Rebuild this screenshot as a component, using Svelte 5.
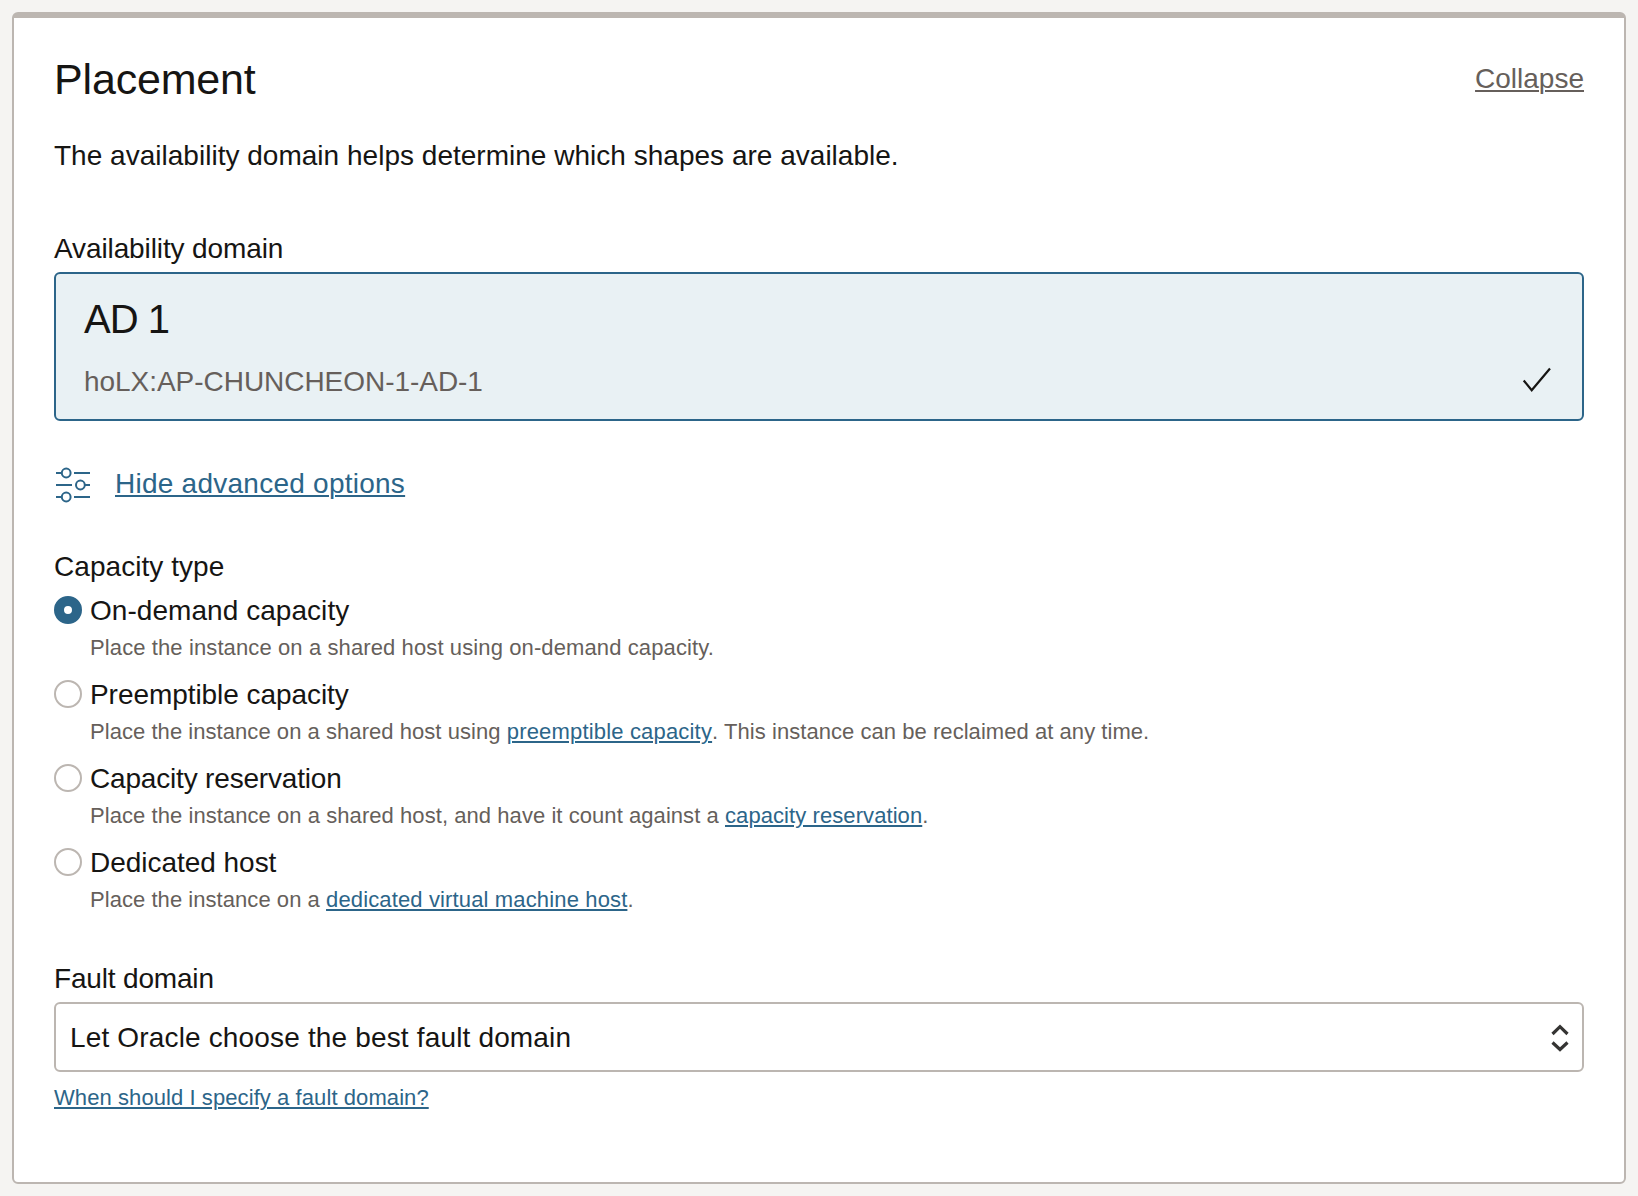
<script>
  const options = [
    { id: 'on-demand', title: 'On-demand capacity', before: 'Place the instance on a shared host using on-demand capacity.', link: '', after: '' },
    { id: 'preemptible', title: 'Preemptible capacity', before: 'Place the instance on a shared host using ', link: 'preemptible capacity', after: '. This instance can be reclaimed at any time.' },
    { id: 'reservation', title: 'Capacity reservation', before: 'Place the instance on a shared host, and have it count against a ', link: 'capacity reservation', after: '.' },
    { id: 'dedicated', title: 'Dedicated host', before: 'Place the instance on a ', link: 'dedicated virtual machine host', after: '.' }
  ];
  let selected = $state('on-demand');
</script>

<main class="page">
  <section class="card">
    <header class="head">
      <h1>Placement</h1>
      <a class="collapse" href="#collapse">Collapse</a>
    </header>
    <p class="intro">The availability domain helps determine which shapes are available.</p>

    <div class="ad-label">Availability domain</div>
    <div class="ad">
      <div>
        <div class="ad-name">AD 1</div>
        <div class="ad-id">hoLX:AP-CHUNCHEON-1-AD-1</div>
      </div>
      <svg class="check" width="30" height="28" viewBox="0 0 30 28" fill="none" stroke="#161513" stroke-width="2.2">
        <path d="M1.700 14.500 9.700 24.200 28 2.500" />
      </svg>
    </div>

    <div class="advanced">
      <svg width="38" height="36" viewBox="0 0 38 36" fill="none" stroke="#2c6589" stroke-width="2">
        <path d="M2 6h6M20 6h16M2 18h16M31 18h5M2 30h6M20 30h16" />
        <circle cx="12.2" cy="6" r="4.4" />
        <circle cx="26.4" cy="18" r="4.4" />
        <circle cx="12.2" cy="30" r="4.4" />
      </svg>
      <a href="#advanced">Hide advanced options</a>
    </div>

    <div class="cap-label">Capacity type</div>
    <div class="options">
      {#each options as o (o.id)}
        <div class="option {o.id}">
          <label>
            <input type="radio" name="capacity" value={o.id} bind:group={selected} />
            <span>{o.title}</span>
          </label>
          <p>{o.before}{#if o.link}<a href="#{o.id}">{o.link}</a>{/if}{o.after}</p>
        </div>
      {/each}
    </div>

    <div class="fault-label">Fault domain</div>
    <div class="select">
      <span>Let Oracle choose the best fault domain</span>
      <svg width="20" height="32" viewBox="0 0 20 32" fill="none" stroke="#353433" stroke-width="3.2">
        <path d="M2.5 12 10 4.7 17.5 12M2.5 20.500 10 27.500 17.5 20.500" />
      </svg>
    </div>
    <a class="help" href="#fault">When should I specify a fault domain?</a>
  </section>
</main>

<style>
  :global(body) { background: #f5f4f2; }
  .page {
    box-sizing: border-box;
    height: 1196px;
    padding: 12px;
    font: 28px/35px "Liberation Sans", Arial, sans-serif;
    color: #161513;
  }
  .card {
    box-sizing: border-box;
    height: 1172px;
    padding: 37px 40px 0;
    background: #fff;
    border: 2px solid #bcb6b1;
    border-top-width: 6px;
    border-radius: 6px;
  }
  a {
    color: #2c6589;
    text-decoration: underline;
    text-decoration-thickness: 2px;
    text-underline-offset: 2px;
  }
  h1, p { margin: 0; font-weight: 400; }
  .head { display: flex; justify-content: space-between; height: 48px; }
  h1 { font-size: 43px; line-height: 48px; letter-spacing: -0.17px; }
  .collapse { margin-top: 6px; color: #665f5b; }
  .intro { margin-top: 35px; letter-spacing: 0.016px; }
  .ad-label { margin-top: 58px; letter-spacing: -0.11px; }
  .ad {
    box-sizing: border-box;
    display: flex;
    justify-content: space-between;
    height: 149px;
    margin-top: 6px;
    padding: 23px 30px 20px 28px;
    background: #e9f1f4;
    border: 2px solid #2c6589;
    border-radius: 6px;
  }
  .ad-name { font-size: 40px; line-height: 44px; letter-spacing: -1px; }
  .ad-id { margin-top: 23px; color: #665f5b; letter-spacing: -0.04px; }
  .check { margin-top: 69px; }
  .advanced { display: flex; height: 35px; margin-top: 45px; }
  .advanced svg { margin-top: 1px; }
  .advanced a { margin-left: 23px; letter-spacing: 0.25px; }
  .cap-label { margin-top: 48px; letter-spacing: 0.05px; }
  .options { display: flex; flex-direction: column; gap: 16px; margin-top: 9px; }
  label { display: flex; gap: 8px; height: 35px; }
  input {
    appearance: none;
    box-sizing: border-box;
    width: 28px;
    height: 28px;
    margin: 3px 0 0;
    border: 2px solid #bcb6b1;
    border-radius: 50%;
    background: #fff;
  }
  input:checked { border: 10px solid #2c6589; }
  .option p {
    margin: 6px 0 0 36px;
    font-size: 22px;
    line-height: 27px;
    letter-spacing: 0.05px;
    color: #665f5b;
  }
  .on-demand label { letter-spacing: 0.05px; }
  .on-demand p { letter-spacing: 0.11px; }
  .preemptible label { letter-spacing: -0.06px; }
  .preemptible p a { letter-spacing: 0.18px; }
  .reservation label { letter-spacing: -0.18px; }
  .reservation p { letter-spacing: 0.06px; }
  .reservation p a { letter-spacing: 0.08px; }
  .dedicated label { letter-spacing: -0.03px; }
  .dedicated p a { letter-spacing: 0.14px; }
  .fault-label { margin-top: 48px; letter-spacing: -0.17px; }
  .select {
    box-sizing: border-box;
    display: flex;
    justify-content: space-between;
    height: 70px;
    margin-top: 6px;
    padding: 16px 12px 0 14px;
    border: 2px solid #bcb6b1;
    border-radius: 6px;
    letter-spacing: 0.16px;
  }
  .select svg { margin-top: 2px; }
  .help {
    display: block;
    width: max-content;
    margin-top: 12px;
    font-size: 22px;
    line-height: 27px;
    letter-spacing: 0.08px;
  }
</style>
